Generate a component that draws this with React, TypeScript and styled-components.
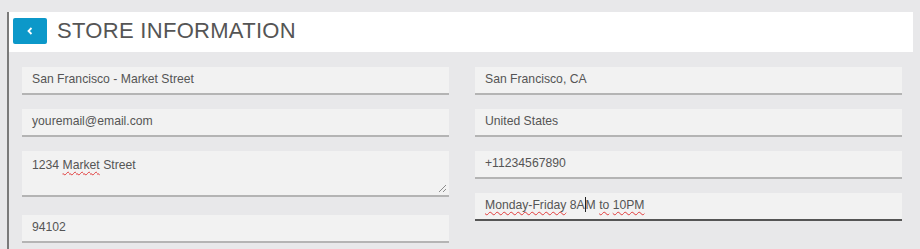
import React, { FC } from 'react';
import styled, { createGlobalStyle } from 'styled-components';

const GlobalStyle = createGlobalStyle`
  html, body {
    margin: 0;
    padding: 0;
    background: #e8e8ea;
    font-family: 'Liberation Sans', Arial, sans-serif;
  }
`;

const Frame = styled.div`
  margin: 12px 0 0 7px;
  width: 906px;
  min-height: 237px;
  border-left: 2px solid #7a7a7a;
  box-sizing: border-box;
`;

const Header = styled.header`
  display: flex;
  align-items: center;
  height: 40px;
  padding: 0 0 2px 4px;
  background: #ffffff;
  box-sizing: border-box;
`;

const BackButton = styled.button`
  display: flex;
  align-items: center;
  justify-content: center;
  width: 34px;
  height: 26px;
  padding: 0;
  border: 0;
  border-radius: 2px;
  background: #0c98c9;
  cursor: pointer;
`;

const Title = styled.h1`
  margin: 0 0 0 10px;
  font-size: 22px;
  font-weight: 400;
  color: #555555;
  letter-spacing: 0.3px;
`;

const Form = styled.div`
  display: grid;
  grid-template-columns: 1fr 1fr;
  column-gap: 26px;
  padding: 15px 11px 0 13px;
`;

const Column = styled.div`
  display: flex;
  flex-direction: column;
  gap: 14px;
`;

const Field = styled.div<{ $tall?: boolean; $focused?: boolean; $offset?: number }>`
  position: relative;
  height: ${(p) => (p.$tall ? 46 : 28)}px;
  margin-top: ${(p) => p.$offset ?? 0}px;
  padding: ${(p) => (p.$tall ? '2px' : '0')} 10px 0;
  box-sizing: border-box;
  background: #f2f2f2;
  border-bottom: 2px solid ${(p) => (p.$focused ? '#555555' : '#b4b4b4')};
  font-size: 12.2px;
  line-height: 25px;
  color: #555555;
  white-space: nowrap;
`;

const Misspelled = styled.span`
  text-decoration: underline wavy #e03a3a;
  text-decoration-thickness: 1px;
  text-underline-offset: 2px;
  text-decoration-skip-ink: none;
`;

const Caret = styled.span`
  display: inline-block;
  width: 1px;
  height: 15px;
  margin: 0 0 -3px;
  background: #222222;
  vertical-align: baseline;
`;

const Grip = styled.svg`
  position: absolute;
  right: 2px;
  bottom: 2px;
`;

const ChevronLeft: FC = () => (
  <svg width="8" height="10" viewBox="0 0 8 10">
    <polyline points="5.5 2 2.5 5 5.5 8" fill="none" stroke="#ffffff" strokeWidth="1.8" />
  </svg>
);

export default function App() {
  return (
    <>
      <GlobalStyle />
      <Frame>
        <Header>
          <BackButton aria-label="Back">
            <ChevronLeft />
          </BackButton>
          <Title>STORE INFORMATION</Title>
        </Header>
        <Form>
          <Column>
            <Field>San Francisco - Market Street</Field>
            <Field>youremail@email.com</Field>
            <Field $tall>
              1234 <Misspelled>Market</Misspelled> Street
              <Grip width="9" height="9" viewBox="0 0 9 9">
                <line x1="1" y1="8" x2="8" y2="1" stroke="#8c8c8c" strokeWidth="1" />
                <line x1="5" y1="8" x2="8" y2="5" stroke="#8c8c8c" strokeWidth="1" />
              </Grip>
            </Field>
            <Field $offset={4}>94102</Field>
          </Column>
          <Column>
            <Field>San Francisco, CA</Field>
            <Field>United States</Field>
            <Field>+11234567890</Field>
            <Field $focused>
              <Misspelled>Monday-Friday</Misspelled> 8A<Caret />M <Misspelled>to</Misspelled>{' '}
              <Misspelled>10PM</Misspelled>
            </Field>
          </Column>
        </Form>
      </Frame>
    </>
  );
}
